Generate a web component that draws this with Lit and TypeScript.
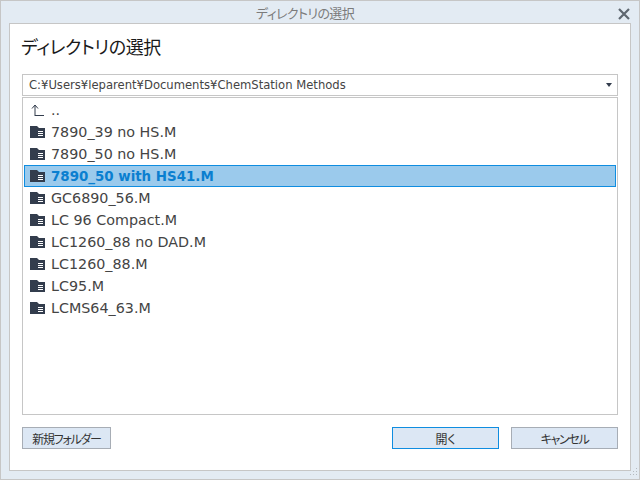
import { LitElement, html, css, svg } from "lit";
import { customElement } from "lit/decorators.js";

const rows = ["7890_39 no HS.M","7890_50 no HS.M","7890_50 with HS41.M","GC6890_56.M","LC 96 Compact.M","LC1260_88 no DAD.M","LC1260_88.M","LC95.M","LCMS64_63.M"];

const folder = svg`<svg class="ico" width="15" height="12" viewBox="0 0 15 12"><path d="M0 0H7L9 2H15V12H0Z" fill="#333d4d"/><path d="M8 5.5H13M8 7.5H13M8 9.5H13" stroke="#fff" stroke-width="1" fill="none"/></svg>`;

@customElement("app-root")
export class AppRoot extends LitElement {
  static styles = css`
    :host { display:block; width:640px; height:480px; font-family:"DejaVu Sans","Noto Sans CJK JP",sans-serif; }
    .win { box-sizing:border-box; width:640px; height:480px; background:#e3ebf3; border:1px solid #c6c6c6; display:flex; flex-direction:column; position:relative; }
    .title { height:22px; box-sizing:border-box; padding-right:30px; display:flex; align-items:center; justify-content:center; font-family:"Noto Sans CJK JP",sans-serif; font-feature-settings:"palt"; font-size:13px; letter-spacing:-0.6px; color:#7b7b7b; position:relative; flex:none; }
    .close { position:absolute; right:8px; top:6px; width:14px; height:14px; }
    .panel { box-sizing:border-box; margin:0 8px; height:448px; background:#fff; border:1px solid #c6c6c6; padding:0 12px; display:flex; flex-direction:column; flex:none; }
    h1 { margin:0 0 0 -1px; height:50px; box-sizing:border-box; padding-top:7px; font:400 18px/30px "Noto Sans CJK JP",sans-serif; font-feature-settings:"palt"; letter-spacing:-0.4px; color:#1a1a1a; flex:none; }
    .combo { box-sizing:border-box; height:22px; border:1px solid #c6c6c6; display:flex; align-items:center; padding:0 6px; font-size:11.6px; color:#444; justify-content:space-between; flex:none; }
    .arrow { width:0; height:0; border-left:3px solid transparent; border-right:3px solid transparent; border-top:4px solid #333d4d; margin-right:-1px; }
    .list { box-sizing:border-box; height:318px; margin-top:1px; border:1px solid #c6c6c6; padding:1px 1px 0; flex:none; }
    .row { box-sizing:border-box; height:22px; display:flex; align-items:center; padding:0 5px; gap:6px; font-size:14.3px; color:#444; border:1px solid transparent; }
    .row .ico { flex:none; }
    .row.sel { background:#9bcaec; border-color:#0f8de0; color:#0a7fd0; font-weight:700; font-size:13.4px; }
    .up { flex:none; }
    .foot { display:flex; margin-top:12px; }
    button { box-sizing:border-box; height:22px; background:#dce7f4; border:1px solid #a7adb5; padding:0; font:400 12px "Noto Sans CJK JP",sans-serif; font-feature-settings:"palt"; color:#333; }
    .new { width:89px; letter-spacing:-1.3px; }
    .open { width:107px; margin-left:auto; border:1px solid #0f8de0; }
    .cancel { width:107px; margin-left:12px; letter-spacing:-1.3px; }
    .grip { position:absolute; right:0; bottom:0; }
  `;
  render() {
    return html`<div class="win">
      <div class="title">ディレクトリの選択
        <svg class="close" viewBox="0 0 14 14"><path d="M2 2L12 12M12 2L2 12" stroke="#5f6770" stroke-width="2.2" fill="none"/></svg>
      </div>
      <div class="panel">
        <h1>ディレクトリの選択</h1>
        <div class="combo"><span>C:¥Users¥leparent¥Documents¥ChemStation Methods</span><span class="arrow"></span></div>
        <div class="list">
          <div class="row"><svg class="up" width="15" height="13" viewBox="0 0 15 13"><path d="M5 12V1.5M2 4.5L5 1L8 4.5M5 11.5H14" stroke="#333d4d" stroke-width="1" fill="none"/></svg><span>..</span></div>
          ${rows.map((r,i)=>html`<div class="row ${i===2?"sel":""}">${folder}<span>${r}</span></div>`)}
        </div>
        <div class="foot">
          <button class="new">新規フォルダー</button>
          <button class="open">開く</button>
          <button class="cancel">キャンセル</button>
        </div>
      </div>
      <svg class="grip" width="12" height="12" viewBox="0 0 12 12" fill="#b5bac0"><rect x="9" y="1" width="1" height="1"/><rect x="9" y="4" width="1" height="1"/><rect x="6" y="4" width="1" height="1"/><rect x="9" y="7" width="1" height="1"/><rect x="6" y="7" width="1" height="1"/><rect x="3" y="7" width="1" height="1"/></svg>
    </div>`;
  }
}
